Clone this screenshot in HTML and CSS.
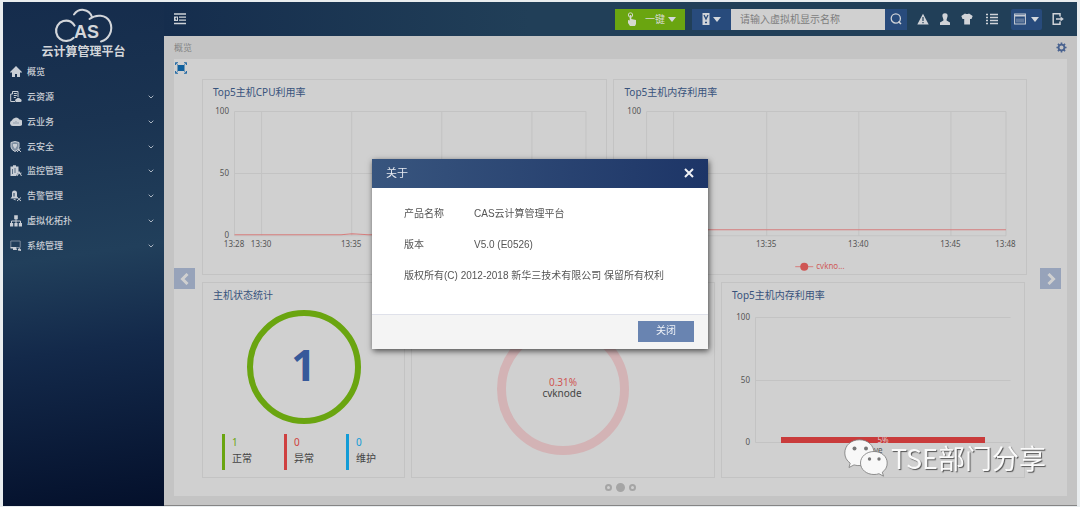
FILE: index.html
```html
<!DOCTYPE html>
<html lang="zh-CN">
<head>
<meta charset="utf-8">
<meta name="viewport" content="width=device-width, initial-scale=1">
<title>CAS云计算管理平台</title>
<link rel="stylesheet" href="styles.css">
</head>
<body>
<div class="app">
  <aside class="sidebar">
    <div class="brand">
      <svg class="brand-logo" viewBox="0 0 60 36" role="img" aria-label="CAS">
        <g fill="none" stroke="#d3d6da" stroke-linecap="round">
          <path d="M19.500 30A10.200 10.200 0 1 1 16.500 13.500Q19 15 20.500 17.500" stroke-width="2.200"/>
          <path d="M20 6.500C25-.5 35 .5 38 9" stroke-width="2"/>
          <path d="M35.500 11C42 6 52 6.500 56 14C60 23 54 32 47 33.500" stroke-width="2"/>
        </g>
        <text x="20" y="30" class="brand-letters">AS</text>
      </svg>
      <div class="brand-name">云计算管理平台</div>
    </div>
    <nav class="nav">
      <a class="nav-item" href="#"><svg class="nav-icon" viewBox="0 0 12 12"><path d="M6 0L0 6l1 1 1-1v5h3V8h2v3h3V6l1 1 1-1z"/></svg><span>概览</span></a>
      <a class="nav-item" href="#"><svg class="nav-icon" viewBox="0 0 12 12"><path d="M2.500.5H8V6M2.500.5V3H.7v7.500H5M3.800 2.500h3M3.800 4.500h3M3.800 6.500h2" fill="none" stroke="#c9ced5"/><path d="M6 11a1.800 1.800 0 0 1 .5-3.300 2 2 0 0 1 3.500 0A1.700 1.700 0 0 1 10.500 11z"/></svg><span>云资源</span><svg class="chevron" viewBox="0 0 6 4"><path d="M.7.7L3 3 5.300.7"/></svg></a>
      <a class="nav-item" href="#"><svg class="nav-icon" viewBox="0 0 12 12"><path d="M2.800 10A2.800 2.800 0 0 1 1.800 4.600 4.300 4.300 0 0 1 9.500 3.600 3.200 3.200 0 0 1 9.500 10z"/><path d="M4 8V6M6 8V5M8 8V6" stroke="#7c8b9c" stroke-width=".7"/></svg><span>云业务</span><svg class="chevron" viewBox="0 0 6 4"><path d="M.7.7L3 3 5.300.7"/></svg></a>
      <a class="nav-item" href="#"><svg class="nav-icon" viewBox="0 0 12 12"><path d="M1 1.500L5 .5l4 1V6Q8.500 9 5 10.500 1.500 9 1 6z" fill="#7f8fa2" stroke="#c9ced5"/><path d="M3 3h4v2L5 8 3 5z"/><path d="M7 11l3.500-4M8 8l3 3" stroke="#c9ced5"/></svg><span>云安全</span><svg class="chevron" viewBox="0 0 6 4"><path d="M.7.7L3 3 5.300.7"/></svg></a>
      <a class="nav-item" href="#"><svg class="nav-icon" viewBox="0 0 12 12"><path d="M.5 1.500H3V.3h3v1.200h2.500V7L6 11H.5z"/><path d="M2.500 4v5M5 3v5" stroke="#5b6f85"/><path d="M7 11l2-4.500L11.500 11M8 9l3.500-1" stroke="#c9ced5" fill="none"/></svg><span>监控管理</span><svg class="chevron" viewBox="0 0 6 4"><path d="M.7.7L3 3 5.300.7"/></svg></a>
      <a class="nav-item" href="#"><svg class="nav-icon" viewBox="0 0 12 12"><path d="M.5 8.500L2 6.500V3a2.500 2.500 0 0 1 5 0v3.500l1 1-1 1zM3 9h2.500v1.500z"/><path d="M4 3v3.500" stroke="#203d5a"/><path d="M7 7.500l4 3.500M11 7.500L7 11" stroke="#c9ced5"/></svg><span>告警管理</span><svg class="chevron" viewBox="0 0 6 4"><path d="M.7.7L3 3 5.300.7"/></svg></a>
      <a class="nav-item" href="#"><svg class="nav-icon" viewBox="0 0 12 12"><path d="M4.200.3h3.600v4H4.200zM0 8h3.200v3.500H0zM4.400 8h3.200v3.500H4.400zM8.800 8H12v3.500H8.800z"/><path d="M6 4v4M1.500 8V6h9v2" stroke="#c9ced5" fill="none"/></svg><span>虚拟化拓扑</span><svg class="chevron" viewBox="0 0 6 4"><path d="M.7.7L3 3 5.300.7"/></svg></a>
      <a class="nav-item" href="#"><svg class="nav-icon" viewBox="0 0 12 12"><path d="M.8 1h9.400v6.500H.8z" fill="none" stroke="#8492a3" stroke-width=".9"/><path d="M.5 7h5.500l1 3H3V8.500H.5zM8 10.500V9l1.500-1L11 9.500V11z"/></svg><span>系统管理</span><svg class="chevron" viewBox="0 0 6 4"><path d="M.7.7L3 3 5.300.7"/></svg></a>
    </nav>
  </aside>

  <div class="workspace">
    <header class="topbar">
      <button class="icon-btn" aria-label="收起菜单"><svg class="icon-12" viewBox="0 0 12 12"><path d="M0 1h12M5 4.200h7M5 7.200h7M0 10.500h12" stroke="#cfd3d8" stroke-width="1.300"/><path d="M0 3.500h4v4.500H0z" fill="#cfd3d8"/><path d="M3 4.300v3L1 5.800z" fill="#1b3551"/></svg></button>
      <div class="topbar-tools">
        <button class="quick-btn">
          <svg class="hand" viewBox="0 0 10 14"><circle cx="3.500" cy="3" r="2.200" fill="none" stroke="#d0d6c8"/><path d="M2.700 3h1.600v4L9 8v4l-1 2H3L1 11V8l1.700.500z" fill="#d5dacf"/></svg>
          <span>一键</span>
          <svg class="caret" viewBox="0 0 8 5"><path d="M0 0h8L4 5z"/></svg>
        </button>
        <form class="search">
          <button type="button" class="search-type" aria-label="搜索类型">
            <svg class="host-icon" viewBox="0 0 8 12"><path d="M.5 0h7v12h-7z" fill="#d0d3d8"/><path d="M2 2l2 4 2-4M3 9.500h2" stroke="#284b7c" stroke-width="1.300" fill="none"/></svg>
            <svg class="caret" viewBox="0 0 8 5"><path d="M0 0h8L4 5z"/></svg>
          </button>
          <input class="search-input" type="text" aria-label="虚拟机显示名称" placeholder="请输入虚拟机显示名称">
          <button type="button" class="search-go" aria-label="搜索"><svg class="icon-12" viewBox="0 0 12 12"><circle cx="5.800" cy="5.500" r="4.600" fill="none" stroke="#d0d3d8" stroke-width="1.300"/><path d="M8.500 8.500l2.500 2.500" stroke="#d0d3d8" stroke-width="1.500"/></svg></button>
        </form>
        <div class="shortcuts">
          <button class="icon-btn" aria-label="告警"><svg class="icon-12" viewBox="0 0 12 12"><path d="M6 .8L11.700 11.500H.3z" fill="#d0d3d8"/><path d="M6 4v4M6 9v1.200" stroke="#213f58" stroke-width="1.200"/></svg></button>
          <button class="icon-btn" aria-label="用户"><svg class="icon-12" viewBox="0 0 12 12"><path d="M6 .3c2 0 2.800 1.300 2.600 3L7.600 6.500v1L11 9.500V12H1V9.500l3.400-2v-1L3.400 3.300C3.200 1.600 4 .3 6 .3z" fill="#d0d3d8"/></svg></button>
          <button class="icon-btn" aria-label="皮肤"><svg class="icon-12" viewBox="0 0 12 12"><path d="M4 .5Q6 1.500 8 .5L11.700 3 10.500 6H9v5.500H3.200V6H1.500L.3 3z" fill="#d0d3d8"/></svg></button>
          <button class="icon-btn list-btn" aria-label="任务"><svg class="icon-12" viewBox="0 0 12 12"><path d="M0 1.500h2M4 1.500h8M0 4.500h2M4 4.500h8M0 7.500h2M4 7.500h8M0 10.500h2M4 10.500h8" stroke="#d0d3d8" stroke-width="1.300"/></svg></button>
        </div>
        <button class="view-btn" aria-label="视图">
          <svg class="icon-12" viewBox="0 0 12 12"><path d="M.6 1h10.800v10H.6z" fill="none" stroke="#c5cbd4" stroke-width="1.100"/><path d="M.6 2.700h10.800" stroke="#c5cbd4" stroke-width="1.600"/><path d="M3 5.500v4M5 5.500v4M7 5.500v4M9 5.500v4" stroke="#97a6bd"/></svg>
          <svg class="caret" viewBox="0 0 8 5"><path d="M0 0h8L4 5z"/></svg>
        </button>
        <button class="icon-btn" aria-label="退出"><svg class="icon-12" viewBox="0 0 12 12"><path d="M8 3.500V.8H1.200v10.400H8V8.500" fill="none" stroke="#d0d3d8" stroke-width="1.500"/><path d="M4 6h5" stroke="#d0d3d8" stroke-width="1.500"/><path d="M8.500 3.500L11.800 6 8.500 8.500z" fill="#d0d3d8"/></svg></button>
      </div>
    </header>

    <main class="content">
      <div class="crumbs">
        <span>概览</span>
        <button class="icon-btn" aria-label="设置"><svg class="gear" viewBox="0 0 12 12"><circle cx="6" cy="6" r="3.200" fill="none" stroke="#4a6390" stroke-width="2"/><path d="M6 .5v2M6 9.500v2M.5 6h2M9.500 6h2M2.100 2.100l1.400 1.400M8.500 8.500l1.400 1.400M9.900 2.100L8.500 3.500M3.500 8.500L2.100 9.900" stroke="#4a6390" stroke-width="1.800"/></svg></button>
      </div>
      <section class="panel">
        <div class="panel-tools">
          <button class="icon-btn" aria-label="全屏"><svg class="icon-12" viewBox="0 0 12 12"><path d="M2.500 3h7v6h-7z" fill="#0f609e"/><path d="M.5 3V.7H3M9 .7h2.500V3M11.500 9v2.300H9M3 11.300H.5V9M.5.7l2 2M11.500.7l-2 2M.5 11.300l2-2M11.500 11.300l-2-2" fill="none" stroke="#2b6ea6"/></svg></button>
        </div>
        <div class="carousel">
          <button class="slide-btn" aria-label="上一页"><svg class="icon-12" viewBox="0 0 12 12"><path d="M8.500 1L3.500 6l5 5"/></svg></button>
          <div class="slides">
            <div class="row row-top">
              <article class="card">
                <h2 class="card-title">Top5主机CPU利用率</h2>
                <svg class="chart" viewBox="0 0 403 174">
                  <g class="grid-lines"><path d="M31.500 11.500h351M31.500 73.500h351M31.500 135.500h351M31.500 11.500v124M58.500 11.500v124M148.500 11.500v124M238.500 11.500v124M328.500 11.500v124M382.500 11.500v124"/></g>
                  <path class="series" d="M31.500 134.500H138l11-.8 16 .8h217"/>
                  <g class="axis end"><text x="26" y="14">100</text><text x="26" y="76">50</text><text x="26" y="138">0</text></g>
                  <g class="axis mid"><text x="31" y="147">13:28</text><text x="58" y="147">13:30</text><text x="148" y="147">13:35</text></g>
                </svg>
              </article>
              <article class="card">
                <h2 class="card-title">Top5主机内存利用率</h2>
                <svg class="chart" viewBox="0 0 411 174">
                  <g class="grid-lines"><path d="M32.500 11.500h359M32.500 73.500h359M32.500 135.500h359M32.500 11.500v124M59.500 11.500v124M152.500 11.500v124M244.500 11.500v124M336.500 11.500v124M391.500 11.500v124"/></g>
                  <path class="series" d="M32.500 129.500h359"/>
                  <g class="axis end"><text x="27" y="14">100</text></g>
                  <g class="axis mid"><text x="152" y="147">13:35</text><text x="244" y="147">13:40</text><text x="336" y="147">13:45</text><text x="391" y="147">13:48</text></g>
                  <path class="series" d="M181 166.500h18"/><circle cx="190" cy="166.500" r="4" fill="#cf5654"/>
                  <text class="legend" x="202" y="169">cvkno...</text>
                </svg>
              </article>
            </div>
            <div class="row row-bottom">
              <article class="card">
                <h2 class="card-title">主机状态统计</h2>
                <div class="total">1</div>
                <ul class="stats">
                  <li class="stat ok"><b>1</b><span>正常</span></li>
                  <li class="stat bad"><b>0</b><span>异常</span></li>
                  <li class="stat care"><b>0</b><span>维护</span></li>
                </ul>
              </article>
              <article class="card">
                <svg class="chart" viewBox="0 0 302 194">
                  <circle cx="151" cy="106" r="61.500" fill="none" stroke="#d3b3b5" stroke-width="9"/>
                  <text class="ring-value" x="151" y="103">0.31%</text>
                  <text class="ring-name" x="150" y="114">cvknode</text>
                </svg>
              </article>
              <article class="card">
                <h2 class="card-title">Top5主机内存利用率</h2>
                <svg class="chart" viewBox="0 0 302 174">
                  <g class="grid-lines"><path d="M33.500 14.500h255M33.500 77.500h255M33.500 139.500h255M33.500 14.500v125"/></g>
                  <path d="M59 134h204v6H59z" fill="#c93b3b"/>
                  <g class="axis end"><text x="28" y="17">100</text><text x="28" y="80">50</text><text x="28" y="142">0</text></g>
                  <text class="bar-value" x="161" y="140">5%</text>
                  <text class="bar-name" x="152" y="150">ve</text>
                </svg>
              </article>
            </div>
          </div>
          <button class="slide-btn" aria-label="下一页"><svg class="icon-12" viewBox="0 0 12 12"><path d="M3.500 1l5 5-5 5"/></svg></button>
        </div>
        <div class="dots"><button class="dot" aria-label="第1页"></button><button class="dot active" aria-label="第2页"></button><button class="dot" aria-label="第3页"></button></div>
      </section>
    </main>
  </div>
</div>

<div class="overlay">
  <section class="dialog" role="dialog" aria-labelledby="dialog-title">
    <header class="dialog-head">
      <h1 id="dialog-title">关于</h1>
      <button class="icon-btn" aria-label="关闭窗口"><svg class="close-icon" viewBox="0 0 10 10"><path d="M1 1l8 8M9 1L1 9"/></svg></button>
    </header>
    <div class="dialog-body">
      <dl class="facts">
        <dt>产品名称</dt><dd>CAS云计算管理平台</dd>
        <dt>版本</dt><dd>V5.0 (E0526)</dd>
      </dl>
      <p>版权所有(C) 2012-2018 新华三技术有限公司 保留所有权利</p>
    </div>
    <footer class="dialog-foot"><button class="close-btn">关闭</button></footer>
  </section>
</div>

<div class="watermark">
  <svg class="chat-icon" viewBox="0 0 44 38">
    <g fill="#f8f8f8" stroke="#777" stroke-width=".8">
      <path d="M15.500.8C7 .8.8 6.500.8 14c0 4.200 2 7.800 5.400 10.200L5 28.500l5-2.600c8 2.500 20-1.500 20-11.900C30 6.500 24 .8 15.500.8z"/>
      <path d="M30 12.500c-7.500 0-13.500 5-13.500 11.500S22.500 35.500 30 35.500c1.800 0 3.400-.2 5-.8l4.500 2.500-1.200-4C41.500 31 43.200 28 43.200 24c0-6.500-5.700-11.500-13.200-11.500z"/>
    </g>
    <g fill="#777"><circle cx="10.500" cy="9.500" r="2"/><circle cx="22" cy="9.500" r="2"/><circle cx="25.500" cy="20" r="1.700"/><circle cx="35" cy="20" r="1.700"/></g>
  </svg>
  <span>TSE部门分享</span>
</div>
</body>
</html>
```

FILE: styles.css
```css
* { box-sizing: border-box; }

body {
  margin: 0;
  background: #e9edef;
  color: #4a4a4a;
  font: 10px/16px "Noto Sans", "Noto Sans CJK SC", sans-serif;
}

button, input { font: inherit; color: inherit; border: 0; padding: 0; border-radius: 0; }
button { background: none; cursor: pointer; }
svg { display: block; flex: none; }
h1, h2, p, dl, dd, ul { margin: 0; padding: 0; }
h1, h2 { font-size: inherit; font-weight: 400; }

.app {
  display: flex;
  min-height: 100vh;
  padding: 2px 3px 1px;
}

/* Sidebar */
.sidebar {
  flex: none;
  width: 161px;
  background: linear-gradient(172deg, #152c4c 0%, #1a3351 25%, #213f5b 50%, #13294a 68%, #04102b 100%);
  color: #c9ced5;
}
.brand {
  display: flex;
  flex-direction: column;
  align-items: center;
  height: 58px;
  padding-top: 6px;
}
.brand-logo { width: 60px; height: 36px; }
.brand-letters { font: bold 18px "Liberation Sans", sans-serif; fill: #d3d6da; }
.brand-name { font: 700 12px/14px "Noto Sans CJK SC", sans-serif; color: #d3d6da; }
.nav {
  display: grid;
  grid-auto-rows: 1fr;
  height: 198px;
  font-size: 9px;
  font-weight: 500;
}
.nav-item {
  display: flex;
  align-items: center;
  padding: 0 10px 0 7px;
  color: inherit;
  text-decoration: none;
}
.nav-icon { width: 12px; height: 12px; margin-right: 5px; fill: #c9ced5; }
.chevron { width: 6px; height: 4px; margin-left: auto; fill: none; stroke: #aab4c0; }

/* Top bar */
.workspace { display: flex; flex: 1; flex-direction: column; min-width: 0; }
.topbar {
  display: flex;
  align-items: center;
  justify-content: space-between;
  height: 34px;
  padding: 0 13px 0 10px;
  background: linear-gradient(90deg, #152d4d, #213f58 40%);
}
.topbar-tools, .search, .shortcuts, .quick-btn, .search-type, .view-btn { display: flex; align-items: center; }
.icon-12 { width: 12px; height: 12px; }
.caret { width: 8px; height: 5px; fill: #d5d9dd; }
.quick-btn {
  width: 70px;
  height: 21px;
  padding-left: 12px;
  margin-right: 7px;
  background: #6aa510;
  color: #d5dacf;
}
.hand { width: 10px; height: 14px; margin-right: 8px; }
.quick-btn .caret { margin-left: 3px; }
.search { height: 21px; }
.search-type { gap: 3px; width: 39px; height: 21px; padding-left: 10px; background: #284b7c; }
.host-icon { width: 8px; height: 12px; }
.search-input { width: 154px; height: 21px; padding: 0 9px; background: #d0d0d0; }
.search-input::placeholder { color: #7d7d7d; opacity: 1; }
.search-go { display: grid; place-items: center; width: 22px; height: 21px; background: #284b7c; }
.shortcuts { gap: 10px; margin: 0 13px 0 10px; }
.list-btn { margin-left: 3px; }
.view-btn { gap: 5px; width: 31px; height: 21px; padding-left: 3px; margin-right: 10px; border-radius: 2px; background: #284b7c; }

/* Content */
.content {
  display: flex;
  flex: 1;
  flex-direction: column;
  padding: 0 10px 9px;
  background: #c4c4c4;
  border-bottom: 1px solid #858585;
}
.crumbs {
  display: flex;
  align-items: center;
  justify-content: space-between;
  height: 23px;
  font-size: 9px;
  color: #858585;
}
.gear { width: 11px; height: 11px; }
.panel { display: flex; flex: 1; flex-direction: column; background: #d0d0d0; }
.panel-tools { height: 20px; padding: 3px 1px; }
.carousel { display: flex; align-items: center; padding-right: 6px; }
.slide-btn { display: grid; flex: none; place-items: center; width: 21px; height: 21px; background: #97a3ba; }
.slide-btn path { fill: none; stroke: #d0d0d0; stroke-width: 3; }
.slides { display: grid; flex: 1; gap: 7px; min-width: 0; margin: 0 13px 0 7px; }
.row { display: grid; gap: 6px; }
.row-top { grid-template-columns: 405fr 413fr; }
.row-bottom { grid-template-columns: 203fr 304fr 304fr; padding-right: 2px; }
.card { min-width: 0; border: 1px solid #c3c3c3; }
.card-title { padding: 4px 10px 0; color: #38537c; }

/* Charts */
.chart { width: 100%; height: auto; }
.grid-lines { fill: none; stroke: #c3c3c3; }
.series { fill: none; stroke: #d67d7c; }
.axis { font-size: 8px; fill: #555; }
.end { text-anchor: end; }
.mid { text-anchor: middle; }
.legend { font-size: 8px; fill: #cf5c5a; }
.ring-value, .ring-name { font-size: 10px; text-anchor: middle; fill: #cf5654; }
.ring-name { fill: #444; }
.bar-value { font-size: 8px; text-anchor: middle; fill: #dcc6c6; }
.bar-name { font-size: 8px; fill: #555; }

/* Host status */
.total {
  display: grid;
  place-items: center;
  width: 114px;
  height: 114px;
  margin: 7px auto 10px;
  padding-bottom: 4px;
  border: 6px solid #6aa510;
  border-radius: 50%;
  font: bold 43px/48px "Open Sans", sans-serif;
  color: #36599a;
}
.stats { display: flex; gap: 26px; padding: 0 19px; list-style: none; }
.stat { width: 36px; height: 36px; padding-left: 7px; border-left: 3px solid; white-space: nowrap; }
.stat b { display: block; font-weight: 400; }
.stat span { display: block; color: #444; }
.ok { color: #6aa510; }
.bad { color: #cf4040; }
.care { color: #129bd6; }

.dots { display: flex; flex: 1; gap: 4px; align-items: center; justify-content: center; }
.dot { width: 7px; height: 7px; border: 2px solid #a5a5a5; border-radius: 50%; }
.dot.active { width: 9px; height: 9px; background: #a5a5a5; }

/* About dialog */
.overlay { position: fixed; inset: 0; display: grid; place-items: center; }
.dialog {
  width: 336px;
  background: #fff;
  box-shadow: 1px 2px 6px rgba(0, 0, 0, .65);
  color: #555;
  font-family: "Liberation Sans", "Noto Sans CJK SC", sans-serif;
}
.dialog-head {
  display: flex;
  align-items: center;
  justify-content: space-between;
  height: 29px;
  padding: 0 14px;
  background: linear-gradient(90deg, #38557e, #1d3567);
  color: #e6eaf0;
  font-size: 11px;
}
.close-icon { width: 10px; height: 10px; fill: none; stroke: #f0f2f5; stroke-width: 2; }
.dialog-body { padding: 18px 32px 30px; }
.facts { display: grid; grid-template-columns: 70px 1fr; row-gap: 15px; margin-bottom: 15px; }
.dialog-foot { display: flex; justify-content: flex-end; padding: 6px 14px 7px; border-top: 1px solid #dfe1ea; background: #f4f4f4; }
.close-btn { width: 56px; height: 21px; background: #6984b1; color: #f0f3f8; }

/* Watermark */
.watermark {
  position: fixed;
  right: 34px;
  bottom: 30px;
  display: flex;
  align-items: center;
  gap: 3px;
  color: #fafafa;
  font: 27px/38px "Noto Sans CJK SC", sans-serif;
  text-shadow: 1px 1px 1px #555;
}
.chat-icon { width: 44px; height: 38px; }
```
